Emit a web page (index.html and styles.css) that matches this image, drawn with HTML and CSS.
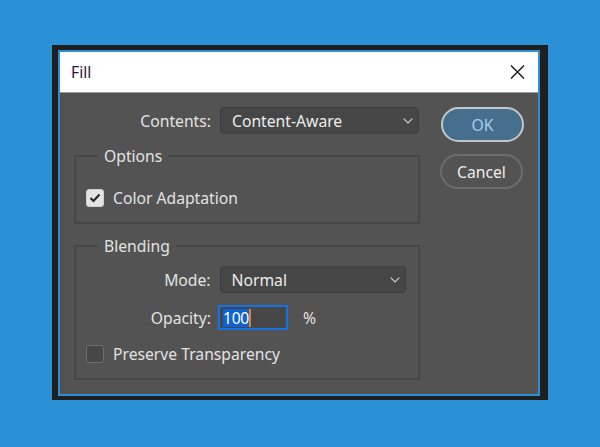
FILE: index.html
```html
<!DOCTYPE html>
<html>
<head>
<meta charset="utf-8">
<link rel="stylesheet" href="styles.css">
</head>
<body>
<div class="frame">
  <div class="dialog">
    <div class="titlebar">
      <span class="title">Fill</span>
      <svg class="close" width="15" height="14" viewBox="0 0 15 14"><path d="M1 0.5 L14 13.5 M14 0.5 L1 13.5" stroke="#111" stroke-width="1.3" fill="none"/></svg>
    </div>
    <div class="body">
      <div class="left">
        <div class="row contents-row">
          <span class="label lbl-contents">Contents:</span>
          <div class="dropdown dd-contents"><span>Content-Aware</span><svg class="chev" width="10" height="6" viewBox="0 0 10 6"><path d="M0.7 0.7 L5 5 L9.3 0.7" stroke="#cfcfcf" stroke-width="1.2" fill="none"/></svg></div>
        </div>
        <fieldset class="group options">
          <legend>Options</legend>
          <div class="check-row">
            <span class="checkbox checked"><svg width="12" height="10" viewBox="0 0 12 10"><path d="M1.5 5 L4.5 8 L10.5 1.5" stroke="#2a2a2a" stroke-width="2.2" fill="none"/></svg></span>
            <span class="check-label">Color Adaptation</span>
          </div>
        </fieldset>
        <fieldset class="group blending">
          <legend>Blending</legend>
          <div class="row mode-row">
            <span class="label lbl-blend">Mode:</span>
            <div class="dropdown dd-mode"><span>Normal</span><svg class="chev" width="10" height="6" viewBox="0 0 10 6"><path d="M0.7 0.7 L5 5 L9.3 0.7" stroke="#cfcfcf" stroke-width="1.2" fill="none"/></svg></div>
          </div>
          <div class="row opacity-row">
            <span class="label lbl-blend">Opacity:</span>
            <div class="input"><span class="sel">100</span><span class="caret"></span></div>
            <span class="pct">%</span>
          </div>
          <div class="check-row preserve">
            <span class="checkbox"></span>
            <span class="check-label">Preserve Transparency</span>
          </div>
        </fieldset>
      </div>
      <div class="buttons">
        <div class="btn ok">OK</div>
        <div class="btn cancel">Cancel</div>
      </div>
    </div>
  </div>
</div>
</body>
</html>
```
FILE: styles.css
```css
html, body {
  margin: 0;
  padding: 0;
}
body {
  background: #2a91d6;
  width: 600px;
  height: 447px;
  overflow: hidden;
  box-sizing: border-box;
  padding: 45px 0 0 52px;
  font-family: "Noto Sans", "Open Sans", sans-serif;
  font-size: 15.7px;
  color: #e2e2e2;
}
.frame {
  width: 496px;
  height: 355px;
  box-sizing: border-box;
  background: #1f1f1f;
  padding: 5px 8px 4px 6px;
}
.dialog {
  box-sizing: border-box;
  width: 482px;
  height: 346px;
  border: 2px solid #2b8fd7;
  background: #535353;
  display: flex;
  flex-direction: column;
}
.titlebar {
  height: 40px;
  flex: none;
  background: #ffffff;
  border-bottom: 1px solid #9c9c9c;
  display: flex;
  align-items: center;
  justify-content: space-between;
  padding: 0 13px 0 11px;
}
.title {
  color: #35123c;
  font-size: 15.7px;
}
.close {
  display: block;
}
.body {
  display: flex;
  padding: 14px 13px 0 14px;
}
.left {
  width: 346px;
  display: flex;
  flex-direction: column;
}
.row {
  display: flex;
  align-items: center;
}
.label {
  text-align: right;
  white-space: nowrap;
}
.lbl-contents {
  width: 137px;
  margin-right: 9px;
}
.lbl-blend {
  width: 135px;
}
.dropdown {
  box-sizing: border-box;
  height: 27px;
  background: #464646;
  border: 1px solid #3e3e3e;
  border-radius: 4px;
  display: flex;
  align-items: center;
  justify-content: space-between;
  padding: 0 5px 0 11px;
  color: #ececec;
}
.dd-contents {
  width: 199px;
}
.dd-mode {
  width: 187px;
  margin-left: 9px;
}
.chev {
  display: block;
}
.group {
  margin: 12px 0 0 0;
  border: 2px solid #464646;
  padding: 0;
  min-width: 0;
}
.group legend {
  margin-left: 22px;
  padding: 0 6px;
  line-height: 20px;
  height: 20px;
}
.options legend {
  margin-left: 12px;
}
.options {
  padding: 23px 12px 15px 10px;
}
.blending {
  padding: 10px 12px 15px 0;
}
.check-row {
  display: flex;
  align-items: center;
  height: 18px;
}
.checkbox {
  box-sizing: border-box;
  width: 18px;
  height: 18px;
  border-radius: 3px;
  background: #474747;
  border: 1px solid #6e6e6e;
  display: flex;
  align-items: center;
  justify-content: center;
  margin-right: 9px;
}
.checkbox.checked {
  background: #e4e4e4;
  border-color: #cfcfcf;
}
.checkbox svg {
  display: block;
}
.opacity-row {
  margin-top: 12px;
}
.input {
  box-sizing: border-box;
  width: 70px;
  height: 25px;
  margin-left: 7px;
  border: 2px solid #1372e4;
  background: #474747;
  display: flex;
  align-items: center;
  padding-left: 3px;
}
.sel {
  background: #0d63d6;
  color: #ffffff;
  line-height: 18px;
  height: 18px;
  letter-spacing: -0.3px;
}
.caret {
  width: 2px;
  height: 18px;
  background: #d78432;
}
.pct {
  margin-left: 15px;
}
.preserve {
  margin-top: 15px;
  padding-left: 10px;
}
.buttons {
  margin-left: 21px;
  display: flex;
  flex-direction: column;
  gap: 12px;
}
.btn {
  box-sizing: border-box;
  width: 83px;
  height: 35px;
  border-radius: 18px;
  display: flex;
  align-items: center;
  justify-content: center;
}
.ok {
  background: #466f8d;
  border: 2px solid #c3c7ca;
  color: #a6cdec;
}
.cancel {
  border: 2px solid #6c6c6c;
  color: #ececec;
  margin-left: -1px;
}
```
